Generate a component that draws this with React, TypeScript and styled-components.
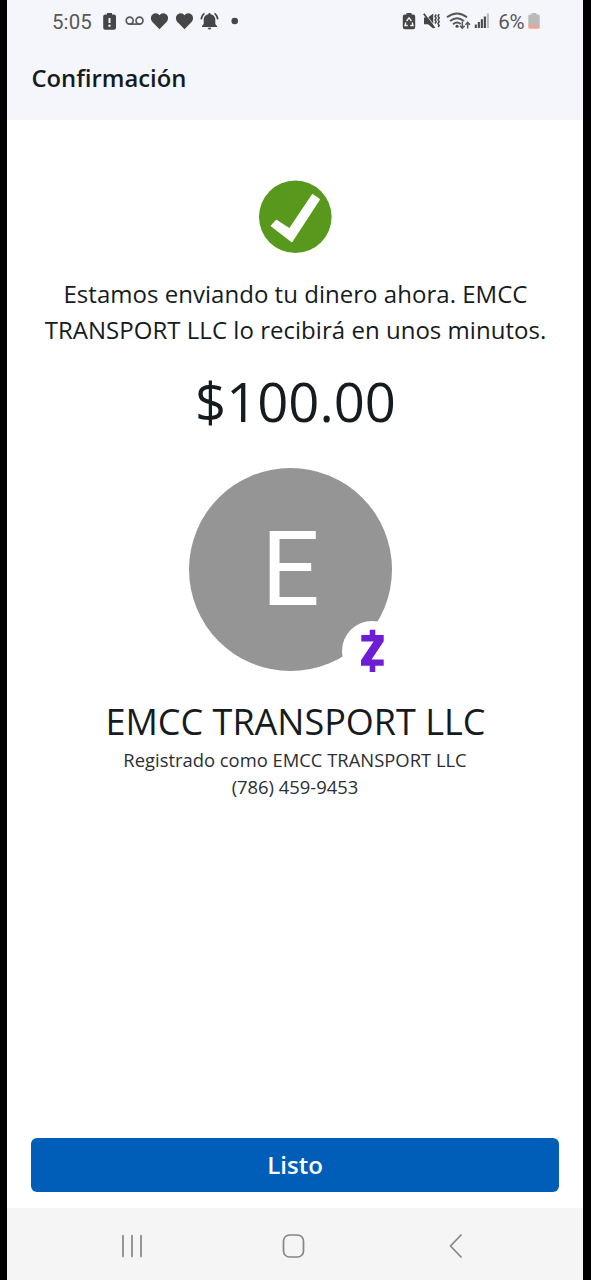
import React from "react";
import styled, { createGlobalStyle } from "styled-components";

const GlobalStyle = createGlobalStyle`
  * { box-sizing: border-box; }
  body { margin: 0; background: #000; }
`;

const Screen = styled.div`
  display: flex;
  flex-direction: column;
  width: 576px;
  height: 1280px;
  margin-left: 7px;
  background: #fff;
  color: #161b20;
  font-family: "Open Sans", "Noto Sans", sans-serif;
`;

const Header = styled.header`
  height: 120px;
  background: #f5f6fb;
`;

const StatusBar = styled.div`
  display: flex;
  justify-content: space-between;
  align-items: center;
  height: 42px;
  padding: 0 43px 0 45px;
  color: #58585a;
  font-family: Roboto, sans-serif;
  font-size: 20.5px;
`;

const StatusGroup = styled.div`
  display: flex;
  align-items: center;
`;

const Clock = styled.span`
  width: 44.5px;
  letter-spacing: 0.1px;
  padding-top: 2px;
`;

const Percent = styled.span`
  margin: 2px 3.5px 0 8px;
  letter-spacing: -0.1px;
`;

const Glyph = styled.svg<{ $w?: number }>`
  display: block;
  flex: none;
  width: ${(p) => p.$w ?? 25}px;
  height: 24px;
  fill: #464648;
  stroke: none;
`;

const Title = styled.h1`
  margin: 18px 0 0 24.5px;
  font-size: 23.8px;
  line-height: 36px;
  font-weight: 600;
`;

const Content = styled.main`
  flex: 1;
  display: flex;
  flex-direction: column;
  align-items: center;
  padding-top: 60px;
  text-align: center;
`;

const Check = styled.svg`
  display: block;
  width: 74px;
  height: 74px;
`;

const Message = styled.p`
  margin: 22px 0 0;
  padding-left: 1px;
  font-size: 24px;
  line-height: 36px;
  letter-spacing: 0.03px;
  white-space: nowrap;
`;

const Amount = styled.div`
  margin-top: 13px;
  padding-left: 1px;
  font-size: 54.4px;
  line-height: 80px;
`;

const Avatar = styled.div`
  position: relative;
  display: flex;
  align-items: center;
  justify-content: center;
  width: 203px;
  height: 203px;
  margin: 27px 9px 0 0;
  border-radius: 50%;
  background: #959595;
  color: #fff;
  font-family: Roboto, sans-serif;
  font-size: 103px;
  line-height: 140px;
`;

const Badge = styled.svg`
  position: absolute;
  left: 153px;
  top: 153px;
  width: 60px;
  height: 60px;
`;

const Name = styled.h2`
  margin: 26px 0 0;
  padding-left: 1px;
  font-size: 36px;
  line-height: 49px;
  font-weight: 400;
`;

const Detail = styled.p`
  margin: 0;
  color: #2b2f33;
  font-size: 18.4px;
  line-height: 27px;
`;

const Done = styled.button`
  height: 54px;
  margin: 0 24px 16px;
  padding: 0 0 2px;
  border: 0;
  border-radius: 6px;
  background: #005eb8;
  color: #fff;
  font: 600 24px "Open Sans", sans-serif;
`;

const NavBar = styled.nav`
  display: flex;
  align-items: center;
  justify-content: space-between;
  height: 72px;
  padding: 4px 108px 0 105px;
  background: #f5f5f5;
`;

const NavIcon = styled.svg`
  display: block;
  width: 40px;
  height: 40px;
  fill: none;
  stroke: #858585;
  stroke-width: 1.7;
  stroke-linecap: round;
  stroke-linejoin: round;
`;

const BatteryAlert = () => (
  <Glyph viewBox="0 0 25 24">
    <path d="M10 4h5v1.500h2q2 0 2 2v11.300q0 2-2 2H8.200q-2 0-2-2V7.500q0-2 2-2H10z" />
    <path d="M12.500 9v5" stroke="#f5f6fb" strokeWidth="2" />
    <circle cx="12.500" cy="16.800" r="1.200" fill="#f5f6fb" />
  </Glyph>
);

const Voicemail = () => (
  <Glyph viewBox="0 0 25 24">
    <g fill="none" stroke="#58585a" strokeWidth="1.700">
      <circle cx="7.700" cy="11.600" r="3.500" />
      <circle cx="17.500" cy="11.600" r="3.500" />
      <path d="M7.700 15.100h9.800" />
    </g>
  </Glyph>
);

const Heart = () => (
  <Glyph viewBox="0 0 25 24">
    <path d="M12.500 20.200L5.700 13.300C3 10.400 3.700 7 5.800 5.300C8.200 3.600 11.100 4.300 12.500 6.300C13.900 4.300 16.800 3.600 19.200 5.300C21.300 7 22 10.400 19.300 13.300Z" />
  </Glyph>
);

const Bell = () => (
  <Glyph viewBox="0 0 25 24">
    <path d="M11.300 5.200a1.200 1.200 0 0 1 2.400 0c3.200.7 4.600 2.700 4.600 5.200v4.700l1.700 1.800v1H5v-1l1.700-1.800v-4.700c0-2.500 1.400-4.500 4.600-5.200zM10.700 18.700h3.600a1.800 1.800 0 0 1-3.600 0z" />
    <path d="M7.500 4.300Q4.600 6.300 4.200 10.400M17.500 4.300Q20.400 6.300 20.800 10.400" fill="none" stroke="#464648" strokeWidth="1.600" />
  </Glyph>
);

const Dot = () => (
  <Glyph viewBox="0 0 25 24">
    <circle cx="12.700" cy="12" r="3.300" />
  </Glyph>
);

const BatteryRecycle = () => (
  <Glyph $w={24} viewBox="0 0 24 24">
    <path d="M9.500 4h5v1.500h1.700q2 0 2 2v10.800q0 1.900-2 1.900H7.800q-2 0-2-1.900V7.500q0-2 2-2h1.700z" />
    <path d="M9.600 12L12 8.800l2.400 3.200M15.200 13.500l.8 3h-2.700M10.700 16.500H8l.8-3" fill="none" stroke="#f5f6fb" strokeWidth="1.300" />
  </Glyph>
);

const MuteVibrate = () => (
  <Glyph $w={22} viewBox="0 0 22 24">
    <path d="M3 8.600H7L12.200 4.500v15L7 15.200H3z" />
    <path d="M2.800 4.800L13.500 19" stroke="#464648" strokeWidth="1.700" />
    <path d="M6.300 7.300L12.800 15.900" stroke="#f5f6fb" strokeWidth=".8" />
    <path d="M15.200 5.500l-1.200 1.800 1.200 1.800-1.200 1.800 1.200 1.800-1.200 1.800M18.200 5.200l-1.200 1.800 1.200 1.900-1.200 1.900 1.200 1.900-1.200 1.900 1.200 1.900-1 1.500" fill="none" stroke="#464648" strokeWidth="1.500" />
  </Glyph>
);

const Wifi = () => (
  <Glyph $w={31} viewBox="0 0 31 24">
    <g fill="none" stroke="#58585a" strokeWidth="1.900">
      <path d="M4 8.300Q14 0.500 24 8.300" />
      <path d="M7 12Q14 6.400 21 12" />
      <path d="M10 15.300Q14 12 17.600 15" />
      <path d="M19.300 12.500v6.500m-2.300-2.300 2.300 2.500 2.300-2.500M24.700 19.500v-6m-2.200 2.200 2.200-2.400 2.200 2.400" strokeWidth="1.500" />
    </g>
    <circle cx="14" cy="17.300" r="1.500" />
  </Glyph>
);

const Signal = () => (
  <Glyph $w={16} viewBox="0 0 16 24">
    <path d="M.8 15.500h2v3.500h-2zM3.800 13h2.100v6H3.800zM6.800 10.200h2.100V19H6.800zM9.800 7.500h2.100V19H9.800z" />
    <path d="M12.800 4.500h2.100V19h-2.100z" fill="#b9b9bb" />
  </Glyph>
);

const BatteryLow = () => (
  <Glyph $w={12} viewBox="0 0 12 24">
    <path d="M3.500 4h5v1.500h1.700Q11.700 5.500 11.700 7v9.500H.3V7Q.3 5.500 1.800 5.500h1.700z" fill="#b9b9b9" />
    <path d="M.3 16h11.400v2.300q0 1.500-1.500 1.500H1.800q-1.500 0-1.500-1.500z" fill="#f0a396" />
  </Glyph>
);

export default function App() {
  return (
    <>
      <GlobalStyle />
      <Screen>
        <Header>
          <StatusBar>
            <StatusGroup>
              <Clock>5:05</Clock>
              <BatteryAlert />
              <Voicemail />
              <Heart />
              <Heart />
              <Bell />
              <Dot />
            </StatusGroup>
            <StatusGroup>
              <BatteryRecycle />
              <MuteVibrate />
              <Wifi />
              <Signal />
              <Percent>6%</Percent>
              <BatteryLow />
            </StatusGroup>
          </StatusBar>
          <Title>Confirmación</Title>
        </Header>
        <Content>
          <Check viewBox="0 0 74 74">
            <circle cx="37.300" cy="36.800" r="36.300" fill="#58981c" />
            <path d="M13.700 45.900L18.500 40.700L31.600 49.300L54.600 15L61 19.400L33.800 61.200Z" fill="#fff" stroke="#fff" strokeWidth="1.800" strokeLinejoin="round" />
          </Check>
          <Message>
            Estamos enviando tu dinero ahora. EMCC
            <br />
            TRANSPORT LLC lo recibirá en unos minutos.
          </Message>
          <Amount>$100.00</Amount>
          <Avatar>
            E
            <Badge viewBox="0 0 60 60">
              <circle cx="30" cy="30" r="30" fill="#fff" />
              <path d="M19.300 14h22.400v6.200L29.600 38.400h12.100v6.400H19v-5.600L31.600 20.600H19.300zM27.700 8.700h5.600v7h-5.600zM27.700 43h5.600v8h-5.600z" fill="#6d1ed4" />
            </Badge>
          </Avatar>
          <Name>EMCC TRANSPORT LLC</Name>
          <Detail>Registrado como EMCC TRANSPORT LLC</Detail>
          <Detail>(786) 459-9453</Detail>
        </Content>
        <Done>Listo</Done>
        <NavBar>
          <NavIcon viewBox="0 0 40 40">
            <path d="M11 9.500v21M20 9.500v21M29 9.500v21" />
          </NavIcon>
          <NavIcon viewBox="0 0 40 40">
            <rect x="9.500" y="9" width="20" height="22" rx="6" />
          </NavIcon>
          <NavIcon viewBox="0 0 40 40">
            <path d="M26 9L15.500 20L26 31" />
          </NavIcon>
        </NavBar>
      </Screen>
    </>
  );
}
